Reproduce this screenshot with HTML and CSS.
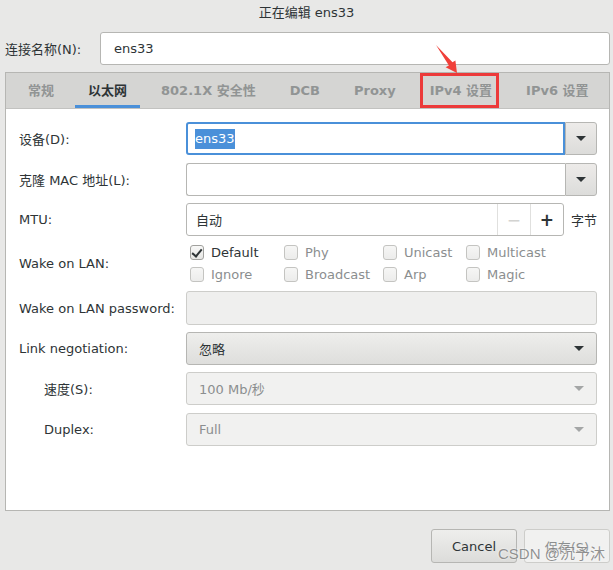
FILE: index.html
```html
<!DOCTYPE html>
<html lang="zh-CN">
<head>
    <meta charset="UTF-8">
    <title>正在编辑 ens33</title>
    <link rel="stylesheet" href="styles.css">
</head>
<body>
    <div class="window">
        <div class="titlebar">正在编辑 ens33</div>

        <div class="name-row">
            <label for="conn-name">连接名称(N):</label>
            <input type="text" id="conn-name" class="entry" value="ens33">
        </div>

        <div class="notebook">
            <div class="tabs">
                <span class="tab">常规</span>
                <span class="tab active">以太网</span>
                <span class="tab">802.1X 安全性</span>
                <span class="tab">DCB</span>
                <span class="tab">Proxy</span>
                <span class="tab">IPv4 设置</span>
                <span class="tab">IPv6 设置</span>
            </div>

            <div class="page">
                <div class="form-row">
                    <span class="label">设备(D):</span>
                    <div class="combo-entry">
                        <div class="combo-text focused"><span class="selected">ens33</span></div>
                        <div class="combo-btn"><span class="arrow"></span></div>
                    </div>
                </div>

                <div class="form-row">
                    <span class="label">克隆 MAC 地址(L):</span>
                    <div class="combo-entry">
                        <div class="combo-text"></div>
                        <div class="combo-btn"><span class="arrow"></span></div>
                    </div>
                </div>

                <div class="form-row">
                    <span class="label">MTU:</span>
                    <div class="mtu">
                        <div class="spin">
                            <div class="spin-text">自动</div>
                            <div class="spin-btn disabled">−</div>
                            <div class="spin-btn">+</div>
                        </div>
                        <span class="unit">字节</span>
                    </div>
                </div>

                <div class="form-row wake">
                    <span class="label">Wake on LAN:</span>
                    <div class="checks">
                        <div class="check"><span class="box checked"></span>Default</div>
                        <div class="check off"><span class="box"></span>Phy</div>
                        <div class="check off"><span class="box"></span>Unicast</div>
                        <div class="check off"><span class="box"></span>Multicast</div>
                        <div class="check off"><span class="box"></span>Ignore</div>
                        <div class="check off"><span class="box"></span>Broadcast</div>
                        <div class="check off"><span class="box"></span>Arp</div>
                        <div class="check off"><span class="box"></span>Magic</div>
                    </div>
                </div>

                <div class="form-row">
                    <span class="label">Wake on LAN password:</span>
                    <div class="entry-disabled"></div>
                </div>

                <div class="form-row">
                    <span class="label">Link negotiation:</span>
                    <div class="combo-button">忽略<span class="arrow"></span></div>
                </div>

                <div class="form-row">
                    <span class="label sub">速度(S):</span>
                    <div class="combo-button disabled">100 Mb/秒<span class="arrow"></span></div>
                </div>

                <div class="form-row">
                    <span class="label sub">Duplex:</span>
                    <div class="combo-button disabled">Full<span class="arrow"></span></div>
                </div>
            </div>
        </div>

        <div class="actions">
            <button class="btn">Cancel</button>
            <button class="btn disabled">保存(S)</button>
        </div>

        <!-- screenshot annotation -->
        <div class="mark-box"></div>
        <svg class="mark-arrow" width="30" height="34" viewBox="0 0 30 34">
            <path d="M1 1 L17.5 18.2 L20.4 16.4 L22 29 L10.6 23.2 L13.9 21.6 Z" fill="#f0403a"/>
        </svg>
        <div class="watermark">CSDN @沉予沐</div>
    </div>
</body>
</html>
```

FILE: styles.css
```css
* {
    margin: 0;
    padding: 0;
    box-sizing: border-box;
}

body {
    font-family: 'DejaVu Sans', 'Noto Sans CJK SC', sans-serif;
    font-size: 13px;
    color: #2e3436;
    background: #e8e8e7;
}

.window {
    position: relative;
    width: 613px;
    height: 570px;
    overflow: hidden;
}

.titlebar {
    height: 26px;
    line-height: 26px;
    text-align: center;
}

/* Connection name */
.name-row {
    display: flex;
    align-items: center;
    margin-top: 6px;
    padding: 0 3px 0 5px;
}

.name-row label {
    width: 95px;
}

.entry {
    flex: 1;
    height: 33px;
    padding: 0 13px;
    font: inherit;
    color: #2e3436;
    background: #fff;
    border: 1px solid #b6b6b3;
    border-radius: 3px;
    outline: none;
}

/* Notebook */
.notebook {
    margin: 7px 3px 0 5px;
    height: 439px;
    border: 1px solid #b6b6b3;
    background: #fff;
}

.tabs {
    display: flex;
    gap: 8px;
    height: 36px;
    padding-left: 9px;
    background: #d5d5d3;
    border-bottom: 1px solid #c2c2c0;
}

.tab {
    padding: 1px 13px 0;
    line-height: 33px;
    font-weight: bold;
    white-space: nowrap;
    color: #919494;
    border-bottom: 3px solid transparent;
}

.tab.active {
    color: #2e3436;
    border-bottom-color: #4a90d9;
}

.page {
    display: grid;
    row-gap: 7.5px;
    padding: 13px 12px 0 13px;
}

.form-row {
    display: grid;
    grid-template-columns: 167px 1fr;
    align-items: center;
    height: 33px;
}

.label {
    white-space: nowrap;
}

.label.sub {
    padding-left: 25px;
}

/* Combo with entry */
.combo-entry {
    display: flex;
    height: 33px;
}

.combo-text {
    flex: 1;
    display: flex;
    align-items: center;
    padding-left: 8px;
    border: 1px solid #b6b6b3;
    border-right: none;
    border-radius: 3px 0 0 3px;
    background: #fff;
}

.combo-text.focused {
    border: 2px solid #4a90d9;
    padding-left: 7px;
}

.selected {
    background: #4a90d9;
    color: #fff;
    line-height: 20px;
}

.combo-btn {
    width: 32px;
    display: flex;
    align-items: center;
    justify-content: center;
    border: 1px solid #b6b6b3;
    border-radius: 0 3px 3px 0;
    background: linear-gradient(#edebe9, #dcdcda);
}

.arrow {
    width: 0;
    height: 0;
    border-left: 5px solid transparent;
    border-right: 5px solid transparent;
    border-top: 5px solid #2e3436;
}

/* MTU spin */
.mtu {
    display: flex;
    align-items: center;
    gap: 7px;
}

.spin {
    flex: 1;
    display: flex;
    height: 33px;
    border: 1px solid #b6b6b3;
    border-radius: 3px;
    background: #fff;
}

.spin-text {
    flex: 1;
    display: flex;
    align-items: center;
    padding-left: 9px;
}

.spin-btn {
    width: 33px;
    display: flex;
    align-items: center;
    justify-content: center;
    border-left: 1px solid #e0e0de;
    font-size: 17px;
    font-weight: bold;
}

.spin-btn.disabled {
    color: #d3d3d1;
    font-weight: normal;
}

.unit {
    flex: none;
    white-space: nowrap;
}

/* Wake on LAN */
.form-row.wake {
    height: 40px;
}

.checks {
    display: grid;
    grid-template-columns: 94px 99px 83px auto;
    row-gap: 7px;
    padding: 1px 0 2px 4px;
}

.check {
    display: flex;
    align-items: center;
    gap: 7px;
    line-height: 15px;
}

.check.off {
    color: #8b8e8f;
}

.box {
    width: 14px;
    height: 15px;
    border: 1px solid #c4c4c1;
    border-radius: 3px;
    background: linear-gradient(#f6f6f5, #ececeb);
}

.box.checked {
    position: relative;
    border-color: #a1a19e;
    background: linear-gradient(#f8f8f7, #e6e6e4);
}

.box.checked::after {
    content: "";
    position: absolute;
    left: 3px;
    top: 1px;
    width: 4px;
    height: 8px;
    border: solid #2e3436;
    border-width: 0 2.5px 2.5px 0;
    transform: rotate(40deg);
}

/* Disabled entry */
.entry-disabled {
    height: 34px;
    border: 1px solid #cdcdca;
    border-radius: 3px;
    background: #efefee;
}

/* Combo buttons */
.combo-button {
    display: flex;
    align-items: center;
    justify-content: space-between;
    height: 33px;
    padding: 0 12px 0 12px;
    border: 1px solid #b6b6b3;
    border-radius: 3px;
    background: linear-gradient(#eeeeec, #dededc);
}

.combo-button.disabled {
    color: #8b8e8f;
    border-color: #cdcdca;
    background: #f1f1f0;
}

.combo-button.disabled .arrow {
    border-top-color: #a4a6a6;
}

/* Dialog buttons */
.actions {
    display: flex;
    justify-content: flex-end;
    gap: 7px;
    margin-top: 18px;
    padding-right: 3px;
}

.btn {
    width: 86px;
    height: 34px;
    font: inherit;
    color: #2e3436;
    border: 1px solid #b6b6b3;
    border-radius: 3px;
    background: linear-gradient(#eeeeec, #dcdcda);
}

.btn.disabled {
    color: #8b8e8f;
    border-color: #cdcdca;
    background: #f1f1f0;
}

/* Annotation overlays */
.mark-box {
    position: absolute;
    left: 420px;
    top: 73px;
    width: 79px;
    height: 35px;
    border: 3px solid #ec3a3a;
}

.mark-arrow {
    position: absolute;
    left: 435px;
    top: 44px;
}

.watermark {
    position: absolute;
    left: 498px;
    top: 542px;
    font-family: 'Liberation Sans', 'Noto Sans CJK SC', sans-serif;
    font-size: 15px;
    color: rgba(110, 110, 110, 0.75);
    text-shadow: 0 0 2px #fff;
}
```
